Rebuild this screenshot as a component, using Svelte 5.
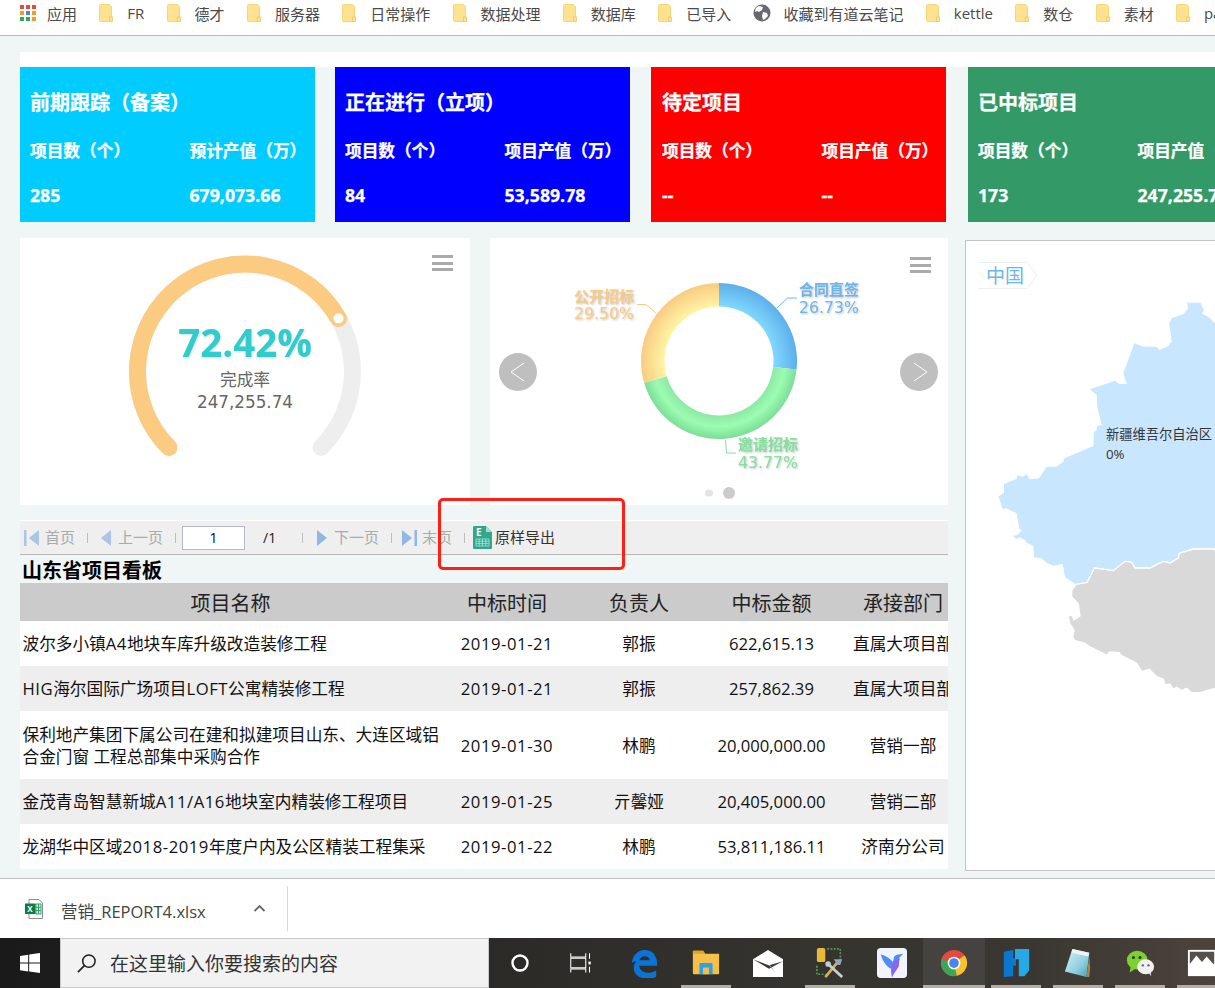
<script>
  const bookmarks = [
    { t: '应用', k: 'apps' }, { t: 'FR', k: 'folder' }, { t: '德才', k: 'folder' }, { t: '服务器', k: 'folder' },
    { t: '日常操作', k: 'folder' }, { t: '数据处理', k: 'folder' }, { t: '数据库', k: 'folder' }, { t: '已导入', k: 'folder' },
    { t: '收藏到有道云笔记', k: 'globe' }, { t: 'kettle', k: 'folder' }, { t: '数仓', k: 'folder' }, { t: '素材', k: 'folder' }, { t: 'pa', k: 'folder' }
  ];
  const appColors = ['#e8483f','#e8483f','#e8483f','#f0a020','#4a86e8','#f0a020','#34a853','#34a853','#f0a020'];
  const cards = [
    { title: '前期跟踪（备案）', a: '项目数（个）', b: '预计产值（万）', x: '285', y: '679,073.66', c: 'cyan' },
    { title: '正在进行（立项）', a: '项目数（个）', b: '项目产值（万）', x: '84', y: '53,589.78', c: 'blue' },
    { title: '待定项目', a: '项目数（个）', b: '项目产值（万）', x: '--', y: '--', c: 'red' },
    { title: '已中标项目', a: '项目数（个）', b: '项目产值（万）', x: '173', y: '247,255.74', c: 'green' }
  ];
  const rows = [
    ['波尔多小镇A4地块车库升级改造装修工程', '2019-01-21', '郭振', '622,615.13', '直属大项目部'],
    ['HIG海尔国际广场项目LOFT公寓精装修工程', '2019-01-21', '郭振', '257,862.39', '直属大项目部'],
    ['保利地产集团下属公司在建和拟建项目山东、大连区域铝合金门窗 工程总部集中采购合作', '2019-01-30', '林鹏', '20,000,000.00', '营销一部'],
    ['金茂青岛智慧新城A11/A16地块室内精装修工程项目', '2019-01-25', '亓馨娅', '20,405,000.00', '营销二部'],
    ['龙湖华中区域2018-2019年度户内及公区精装工程集采', '2019-01-22', '林鹏', '53,811,186.11', '济南分公司']
  ];
  const parts = (s) => s.split(/([A-Za-z0-9\/-]+)/);
  const pt = (cx, cy, r, a) => {
    const t = (a * Math.PI) / 180;
    return [cx + r * Math.sin(t), cy - r * Math.cos(t)];
  };
  const arc = (cx, cy, r, a0, a1) => {
    const [x0, y0] = pt(cx, cy, r, a0);
    const [x1, y1] = pt(cx, cy, r, a1);
    return `M${x0} ${y0}A${r} ${r} 0 ${a1 - a0 > 180 ? 1 : 0} 1 ${x1} ${y1}`;
  };
  const slice = (a0, a1) => {
    const R = 78, r = 54.5, cx = 719, cy = 361;
    const [x0, y0] = pt(cx, cy, R, a0);
    const [x1, y1] = pt(cx, cy, R, a1);
    const [x2, y2] = pt(cx, cy, r, a1);
    const [x3, y3] = pt(cx, cy, r, a0);
    return `M${x0} ${y0}A${R} ${R} 0 0 1 ${x1} ${y1}L${x2} ${y2}A${r} ${r} 0 0 0 ${x3} ${y3}Z`;
  };
  const gaugeEnd = pt(245, 371.5, 107.5, 60.5);
  const taskIcons = ['cortana', 'task', 'edge', 'files', 'mail', 'tools', 'bird', 'chrome', 'fine', 'note', 'wechat', 'photos'];
  const running = ['files', 'tools', 'chrome', 'fine', 'note', 'wechat', 'photos'];
</script>

<div class="screen">
  <nav class="bookmarks">
    {#each bookmarks as b}
      <div class="bm">
        {#if b.k === 'apps'}
          <svg class="bm-apps" viewBox="0 0 16 16">
            {#each appColors as c, i}
              <rect x={(i % 3) * 6} y={Math.floor(i / 3) * 6} width="4" height="4" fill={c} />
            {/each}
          </svg>
        {:else if b.k === 'globe'}
          <svg class="bm-globe" viewBox="0 0 18 18">
            <circle cx="9" cy="9" r="8.5" fill="#666a70" />
            <path d="M6 2l4 1-1 3-3 2-2-1-2 1C2 5 3 3 6 2zM10 8l4 1 1 3-3 3-2 1-1-4z" fill="#fff" />
          </svg>
        {:else}
          <svg class="bm-folder" viewBox="0 0 14 18">
            <path d="M.5 1.5A1 1 0 0 1 1.5.5h9l2 2v14a1 1 0 0 1-1 1h-10a1 1 0 0 1-1-1z" fill="#fee28f" stroke="#f6d67a" />
            <rect x="10.5" y="13" width="3" height="4.5" fill="#fee28f" stroke="#ecc765" stroke-width=".8" />
          </svg>
        {/if}
        <span>{b.t}</span>
      </div>
    {/each}
  </nav>

  <main class="page">
    <div class="strip"></div>
    <section class="cards">
      {#each cards as c}
        <article class="card {c.c}">
          <h2>{c.title}</h2>
          <div class="stat">
            <span>{c.a}</span><span>{c.b}</span>
            <span class="v">{c.x}</span><span class="v">{c.y}</span>
          </div>
        </article>
      {/each}
    </section>

    <div class="columns">
      <div class="left">
        <div class="charts">
          <div class="panel gauge">
            <svg viewBox="20 238 450 267">
              <path d={arc(245, 371.5, 107.5, -135, 135)} fill="none" stroke="#eeeeee" stroke-width="17" stroke-linecap="round" />
              <path d={arc(245, 371.5, 107.5, -135, 60.5)} fill="none" stroke="#facb80" stroke-width="17" stroke-linecap="round" />
              <circle cx={gaugeEnd[0]} cy={gaugeEnd[1]} r="7.5" fill="#facb80" />
              <circle cx={gaugeEnd[0]} cy={gaugeEnd[1]} r="5" fill="#fff" />
              <text class="pct" x="245" y="357">72.42%</text>
              <text class="lab" x="245" y="386">完成率</text>
              <text class="val" x="245" y="408">247,255.74</text>
            </svg>
            <div class="menu"><i></i><i></i><i></i></div>
          </div>
          <div class="panel donut">
            <svg viewBox="490 238 458 267">
              <defs>
                <radialGradient id="gb" gradientUnits="userSpaceOnUse" cx="719" cy="361" r="78">
                  <stop offset=".7" stop-color="#80d8ff" /><stop offset="1" stop-color="#5dafea" />
                </radialGradient>
                <radialGradient id="gg" gradientUnits="userSpaceOnUse" cx="719" cy="361" r="78">
                  <stop offset=".7" stop-color="#8de9a6" /><stop offset=".84" stop-color="#9cfcb1" /><stop offset="1" stop-color="#7cdd97" />
                </radialGradient>
                <radialGradient id="go" gradientUnits="userSpaceOnUse" cx="719" cy="361" r="78">
                  <stop offset=".7" stop-color="#fff4a3" /><stop offset="1" stop-color="#f9cb82" />
                </radialGradient>
              </defs>
              <path d={slice(0, 96.2)} fill="url(#gb)" />
              <path d={slice(96.2, 253.8)} fill="url(#gg)" />
              <path d={slice(253.8, 360)} fill="url(#go)" />
              <polyline class="lead" points="777,308 787.5,298 797,298" stroke="#6cb6ef" />
              <polyline class="lead" points="656,313 646,304.5 637,304.5" stroke="#f9cb82" />
              <polyline class="lead" points="725.5,440 726.5,453 736,453" stroke="#84e09d" />
              <g class="lbl blue-l"><text x="799" y="295">合同直签</text><text class="num" x="799" y="313">26.73%</text></g>
              <g class="lbl orange-l"><text x="574" y="302">公开招标</text><text class="num" x="574" y="319">29.50%</text></g>
              <g class="lbl green-l"><text x="738" y="450">邀请招标</text><text class="num" x="738" y="468">43.77%</text></g>
              <circle cx="518" cy="372" r="19" fill="#bfbfbf" />
              <circle cx="919" cy="372" r="19" fill="#bfbfbf" />
              <polyline class="chev" points="524,363 511,372 524,381" />
              <polyline class="chev" points="914,363 927,372 914,381" />
              <rect x="705" y="489.5" width="8" height="7" rx="3.5" fill="#e4e4e4" />
              <circle cx="729" cy="493" r="6" fill="#cbcbcb" />
            </svg>
            <div class="menu second"><i></i><i></i><i></i></div>
          </div>
        </div>

        <div class="toolbar">
          <svg class="ic first" viewBox="0 0 15 18"><rect x="0" y="1" width="2.5" height="16" fill="#a9c6e6" /><path d="M15 1v16L5 9z" fill="#a9c6e6" /></svg>
          <span class="tx">首页</span>
          <i class="sep"></i>
          <svg class="ic prev" viewBox="0 0 12 18"><path d="M11 1v16L1 9z" fill="#a9c6e6" /></svg>
          <span class="tx">上一页</span>
          <i class="sep tight"></i>
          <input class="pageno" value="1" aria-label="页码" />
          <span class="total">/1</span>
          <i class="sep after-total"></i>
          <svg class="ic next" viewBox="0 0 12 18"><path d="M1 1v16L11 9z" fill="#8fb8e2" /></svg>
          <span class="tx">下一页</span>
          <i class="sep before-last"></i>
          <svg class="ic last" viewBox="0 0 16 18"><path d="M0 1v16L10 9z" fill="#8fb8e2" /><rect x="12.5" y="1" width="2.5" height="16" fill="#8fb8e2" /></svg>
          <span class="tx last-t">末页</span>
          <i class="sep before-xl"></i>
          <svg class="xl" viewBox="0 0 19 23">
            <path d="M0 1a1 1 0 0 1 1-1h12l6 6v16a1 1 0 0 1-1 1H1a1 1 0 0 1-1-1z" fill="#32a78e" />
            <path d="M13 0l6 6h-6z" fill="#a9dccf" />
            <text x="3" y="10" class="xl-e">E</text>
            <path d="M3 13h13v7H3zM3 15.3h13M3 17.6h13M6.2 13v7M9.5 13v7M12.8 13v7" fill="none" stroke="#bfe6dc" stroke-width=".7" />
          </svg>
          <span class="export">原样导出</span>
        </div>

        <h1>山东省项目看板</h1>
        <div class="table-wrap">
          <table>
            <colgroup><col class="c1" /><col class="c2" /><col class="c3" /><col class="c4" /><col class="c5" /></colgroup>
            <thead><tr><th class="th-name">项目名称</th><th>中标时间</th><th>负责人</th><th>中标金额</th><th>承接部门</th></tr></thead>
            <tbody>
              {#each rows as r, i}
                <tr class:alt={i % 2 === 1} class:tall={i === 2}>
                  <td class="name">{#each parts(r[0]) as p, j}{#if j % 2}<span class="lat">{p}</span>{:else}{p}{/if}{/each}</td><td class="lat">{r[1]}</td><td>{r[2]}</td><td>{r[3]}</td><td class="dept">{r[4]}</td>
                </tr>
              {/each}
            </tbody>
          </table>
        </div>
      </div>

      <aside class="map">
        <svg viewBox="966 241 250 629">
          <g transform="translate(1000 480) scale(.33333)">
            <polygon fill="#c8e7ff" points="560,-532 603,-532 605,-522 612,-508 605,-500 625,-490 645,-470 700,-470 700,205 640,205 580,205 538,218 535,232 510,247 490,242 450,262 405,262 395,245 375,242 340,270 285,262 262,305 228,313 195,292 188,252 160,257 140,248 125,235 102,232 100,198 80,188 75,180 58,172 50,178 38,168 52,165 65,152 58,145 50,100 18,85 8,88 3,70 -5,50 12,38 12,12 50,-4 52,-14 70,-10 80,-18 88,-2 117,-5 140,-40 168,-40 190,-55 193,-65 280,-102 282,-145 290,-150 292,-162 305,-165 292,-220 290,-255 270,-272 345,-298 358,-288 380,-288 370,-320 403,-410 430,-400 470,-400 478,-390 505,-402 515,-415 508,-470 515,-485 550,-498 565,-515" />
            <polygon fill="#d9d9d9" stroke="#fff" stroke-width="4" points="228,313 262,307 283,264 340,272 375,244 395,247 405,264 450,264 490,244 510,249 535,234 538,220 580,207 640,207 650,215 700,215 700,600 645,625 600,638 575,638 560,625 545,632 530,622 520,628 510,612 495,615 490,598 470,590 452,572 448,568 425,575 410,550 362,525 358,518 328,516 322,527 305,518 265,498 255,490 225,482 218,472 222,450 210,432 204,408 216,405 222,420 240,408 235,372 215,350 215,332" />
          </g>
          <text class="map-t" x="1106" y="439">新疆维吾尔自治区</text>
          <text class="map-t" x="1106" y="459">0%</text>
          <path d="M978 262.5h49l10 13-10 13h-49" fill="#fff" stroke="#eeeeee" />
          <text class="crumb" x="986" y="282.5">中国</text>
        </svg>
      </aside>
    </div>
  </main>

  <footer class="downloads">
    <svg class="dl-ic" viewBox="0 0 18 20">
      <path d="M4 .5h10l3.5 3.5v15.500H4z" fill="#fff" stroke="#8d8d8d" />
      <path d="M11 5h5v10h-5zM11 8.300h5M11 11.600h5M13.500 5v10" fill="none" stroke="#21a366" />
      <rect x="0" y="4.500" width="10.500" height="10.500" fill="#107c41" />
      <text x="2.300" y="13" class="dl-x">X</text>
    </svg>
    <span class="dl-name">营销_REPORT4.xlsx</span>
    <svg class="dl-up" viewBox="0 0 12 8"><path d="M1 7l5-5 5 5" fill="none" stroke="#666" stroke-width="1.800" /></svg>
    <i class="dl-div"></i>
  </footer>

  <div class="taskbar">
    <div class="start">
      <svg viewBox="0 0 20 20"><path d="M0 2.900l8.200-1.200v7.900H0zM9.200 1.500L20 0v9.600H9.200zM0 10.500h8.200v7.900L0 17.200zM9.200 10.500H20V20L9.200 18.500z" fill="#fff" /></svg>
    </div>
    <div class="search">
      <svg viewBox="0 0 22 22"><circle cx="13.500" cy="8.500" r="6.500" fill="none" stroke="#222" stroke-width="1.600" /><path d="M8.800 13.200L2 20" stroke="#222" stroke-width="1.800" /></svg>
      <span>在这里输入你要搜索的内容</span>
    </div>
    {#each taskIcons as k}
      <div class="cell" class:active={k === 'chrome'} class:run={running.includes(k)}>
        <svg viewBox="0 0 32 32">
          {#if k === 'cortana'}
            <circle cx="16" cy="16" r="8" fill="none" stroke="#fff" stroke-width="2.600" />
          {:else if k === 'task'}
            <path d="M4 5.500v4h16v-4M4 11h16v10H4zM4 26v-3.500h16v3.500M24 5.500v6M24 20v6" fill="none" stroke="#fff" stroke-width="1.100" />
            <rect x="22.800" y="14.500" width="2.600" height="3" fill="#fff" />
          {:else if k === 'edge'}
            <path d="M3 16C4 7 10 2 17 2c8 0 13 6 13 15v2H11c0 7 10 10 18 5v7c-10 4-24 1-24-10 0-3 1-5 3-7-2 0-4 1-5 2zM11 13h11c0-5-9-6-11 0z" fill="#0a74d8" />
          {:else if k === 'files'}
            <path d="M2 4a1 1 0 0 1 1-1h10l2 3h15v21a1 1 0 0 1-1 1H3a1 1 0 0 1-1-1z" fill="#f5c04a" />
            <path d="M2 3h11l2 3H2z" fill="#e6a21e" />
            <path d="M9 28V17a1 1 0 0 1 1-1h12a1 1 0 0 1 1 1v11h-4v-7h-6v7z" fill="#2f9fe6" />
            <rect x="13" y="21" width="6" height="7" fill="#f5c04a" />
          {:else if k === 'mail'}
            <path d="M0 12L16 2l16 10v19H0z" fill="#fff" />
            <path d="M0 12l17 10 15-8-14 4 6 9-6-8z" fill="#3a3a36" />
          {:else if k === 'tools'}
            <rect x="2" y="0" width="9" height="15" rx="2" fill="#e8b93a" />
            <path d="M13 1h14v13M2 19v9h9" fill="none" stroke="#4d9e4d" stroke-width="1.800" stroke-dasharray="2 1.500" />
            <path d="M11 31l14-17" stroke="#d9b35a" stroke-width="2.800" />
            <path d="M14 17l15 14" stroke="#c4cdd6" stroke-width="3" />
            <path d="M20 12h9l-2 6-3 0z" fill="#8ea6bf" />
            <circle cx="14" cy="17" r="3" fill="#c4cdd6" />
          {:else if k === 'bird'}
            <rect x="0" y="0" width="32" height="32" rx="4" fill="#f1f3ff" />
            <path d="M4 7c5 1 10 4 13 8l1-5c1-2 3-3 5-3l5-1-4 4-1 9-6 9-1 3-1-9c-5-2-9-8-11-15z" fill="#4f8df5" />
            <path d="M17 15l7-4-1 9-6 9-1 3-1-9z" fill="#8a63ee" />
          {:else if k === 'chrome'}
            <circle cx="16" cy="16" r="14" fill="#e24b3e" />
            <path d="M16 16L5 24.500A14 14 0 0 0 19 29.700z" fill="#3aa757" />
            <path d="M16 16l3 13.700A14 14 0 0 0 30 16c0-3-1-6-3-8z" fill="#f4c430" />
            <path d="M16 16L2.700 12A14 14 0 0 0 5 24.500z" fill="#3aa757" />
            <circle cx="16" cy="16" r="6.800" fill="#fff" />
            <circle cx="16" cy="16" r="5.200" fill="#4a86e8" />
          {:else if k === 'fine'}
            <path d="M3 4l10-2v9h3v8h-3v11l-10 1z" fill="#0a78cf" />
            <path d="M15 1h15v23l-5 6h-6V12h-4z" fill="#27a9e6" />
          {:else if k === 'note'}
            <defs>
              <linearGradient id="ng" x1="0" y1="0" x2="1" y2="1">
                <stop offset="0" stop-color="#d9f0f4" /><stop offset=".6" stop-color="#8fd0e0" /><stop offset="1" stop-color="#4f9bb0" />
              </linearGradient>
            </defs>
            <path d="M10 1l18 4-3 26L2 25z" fill="url(#ng)" />
            <path d="M10 1l18 4-1 4-18-4z" fill="#eef4f6" />
            <path d="M25 31l3-22 1 12-1 10z" fill="#a5864c" />
          {:else if k === 'wechat'}
            <ellipse cx="13" cy="13" rx="11" ry="10" fill="#7bd130" />
            <path d="M6 20l-1 6 6-4z" fill="#7bd130" />
            <circle cx="9" cy="10" r="1.600" fill="#333" /><circle cx="16" cy="10" r="1.600" fill="#333" />
            <ellipse cx="22" cy="20" rx="9" ry="8" fill="#f2f2f2" />
            <path d="M25 26l3 4-1-6z" fill="#f2f2f2" />
            <circle cx="19" cy="18.500" r="1.300" fill="#666" /><circle cx="25" cy="18.500" r="1.300" fill="#666" />
          {:else}
            <rect x="1" y="2" width="30" height="28" fill="#fff" />
            <rect x="3" y="4" width="26" height="13" fill="#555049" />
            <path d="M3 17l7-9 6 7 5-6 8 9v3H3z" fill="#fff" />
          {/if}
        </svg>
      </div>
    {/each}
  </div>

  <div class="annot" aria-hidden="true"></div>
</div>

<style>
  :global(body) { margin: 0; }
  * { box-sizing: border-box; }
  .screen {
    position: relative;
    width: 1215px;
    height: 988px;
    overflow: hidden;
    display: flex;
    flex-direction: column;
    font-family: "Open Sans", "Noto Sans CJK SC", sans-serif;
    background: #fff;
  }

  .bookmarks {
    flex: none;
    height: 36px;
    padding: 0 0 9px 20px;
    display: flex;
    align-items: center;
    gap: 22.3px;
    background: #fff;
    border-bottom: 1px solid #b9b9b9;
    white-space: nowrap;
    font-size: 15px;
    color: #4a4a4a;
  }
  .bm { flex: none; display: flex; align-items: center; height: 26px; }
  .bm-apps { width: 16px; height: 16px; margin-right: 11px; }
  .bm-folder { width: 14px; height: 18px; margin-right: 14px; }
  .bm-globe { width: 18px; height: 18px; margin-right: 12px; }

  .page {
    flex: none;
    height: 843px;
    padding-top: 16px;
    background: #f0f5f5;
    border-bottom: 1px solid #bdbdbd;
    overflow: hidden;
  }
  .strip { height: 15px; margin-left: 20px; background: #fff; }
  .cards { display: flex; margin-left: 20px; height: 155px; margin-bottom: 16px; }
  .card { flex: none; width: 295px; height: 155px; padding: 21px 0 0 10px; color: #fff; -webkit-text-stroke: .25px #fff; }
  .card + .card { margin-left: 20px; }
  .card:nth-child(3) { margin-left: 21px; padding-left: 11px; }
  .card:nth-child(4) { margin-left: 22px; }
  .cyan { background: #00ccff; }
  .blue { background: #0000ff; }
  .red { background: #ff0000; }
  .green { background: #339966; }
  .card h2 { margin: 0; font-size: 20px; line-height: 30px; font-weight: 700; }
  .stat {
    display: grid;
    grid-template-columns: 159.5px auto;
    justify-content: start;
    row-gap: 20px;
    margin-top: 21px;
    font-size: 16.7px;
    line-height: 24px;
    font-weight: 700;
    white-space: nowrap;
  }
  .stat .v { font-size: 17.7px; }

  .columns { display: flex; margin-left: 20px; align-items: flex-start; }
  .left { flex: none; width: 928px; }
  .charts { display: flex; gap: 20px; height: 267px; margin-bottom: 15px; }
  .panel { position: relative; background: #fff; height: 267px; }
  .panel svg { display: block; width: 100%; height: 100%; }
  .gauge { width: 450px; }
  .donut { width: 458px; }
  .menu { position: absolute; top: 17px; right: 17px; width: 21px; display: flex; flex-direction: column; gap: 3.500px; }
  .menu.second { top: 19px; }
  .menu i { display: block; height: 3px; background: #aaaaaa; }

  .pct { font-size: 38.500px; font-weight: 700; fill: #33cccc; text-anchor: middle; filter: drop-shadow(1px 1px 1px rgba(0,0,0,.15)); }
  .lab { font-size: 16.700px; fill: #666; text-anchor: middle; }
  .val { font-family: "DejaVu Sans", sans-serif; font-size: 16.800px; fill: #666; text-anchor: middle; }
  .lead { fill: none; stroke-width: 1; }
  .lbl text { font-size: 15px; font-weight: 700; filter: drop-shadow(1px 1px 1px rgba(0,0,0,.25)); }
  .lbl .num { font-family: "DejaVu Sans", sans-serif; font-size: 15.700px; font-weight: 400; }
  .blue-l { fill: #6cb6ef; }
  .orange-l { fill: #f9cb82; }
  .green-l { fill: #84e09d; }
  .chev { fill: none; stroke: #fff; stroke-width: 1; }

  .toolbar {
    display: flex;
    align-items: center;
    height: 35px;
    padding-left: 4px;
    background: #efefef;
    border-top: 1px solid #fff;
    border-bottom: 1px solid #b5b5b5;
    font-size: 15px;
    white-space: nowrap;
  }
  .ic { flex: none; height: 18px; margin-right: 6px; }
  .ic.first { width: 15px; }
  .ic.prev, .ic.next { width: 12px; }
  .ic.last { width: 16px; margin-right: 4px; }
  .tx, .export { position: relative; top: -1px; }
  .tx { color: #aaaaaa; }
  .sep { flex: none; width: 1px; height: 10px; margin: 0 12px; background: #bdbdbd; }
  .sep.tight { margin-right: 6px; }
  .sep.after-total { margin: 0 13px 0 25px; }
  .sep.before-last { margin-right: 10px; }
  .sep.before-xl { margin-right: 8px; }
  .pageno {
    flex: none;
    width: 63px;
    height: 24px;
    padding: 0;
    border: 1px solid #b5b8d0;
    background: #fff;
    color: #000066;
    font: 14px "Open Sans", sans-serif;
    text-align: center;
  }
  .total { margin-left: 18px; width: 14px; font-size: 14px; color: #222; }
  .xl { flex: none; width: 19px; height: 23px; margin-right: 3px; }
  .xl-e { font-size: 10px; font-weight: 700; fill: #fff; }
  .export { color: #333; }

  h1 { margin: 0; height: 28px; padding-left: 2px; font-size: 20px; line-height: 31px; font-weight: 700; color: #000; }
  .table-wrap { width: 928px; overflow: hidden; }
  table { width: 950px; table-layout: fixed; border-collapse: collapse; color: #111; font-size: 16.670px; }
  .c1 { width: 423px; } .c2 { width: 128px; } .c3 { width: 136px; } .c4 { width: 129px; } .c5 { width: 134px; }
  th { height: 38px; padding: 0; background: #cbcbcb; font-size: 20px; font-weight: 400; color: #222; }
  .th-name { padding-right: 2px; }
  td { height: 45px; padding: 0; text-align: center; line-height: 22px; background: #fff; overflow: hidden; white-space: nowrap; }
  tr.alt td { background: #eeeeee; }
  tr.tall td { height: 68px; padding-top: 2px; }
  td.name { text-align: left; padding-left: 2.500px; padding-right: 2px; white-space: normal; }
  .lat { letter-spacing: .55px; }

  .map {
    flex: none;
    width: 260px;
    height: 631px;
    margin: 2px 0 0 17px;
    background: #fff;
    border: 1px solid #c4c4c4;
  }
  .map svg { display: block; width: 250px; height: 629px; }
  .map-t { font-size: 13.250px; fill: #333; }
  .crumb { font-size: 19px; fill: #6cb6ef; }

  .downloads {
    flex: none;
    height: 59px;
    padding-left: 25px;
    display: flex;
    align-items: center;
    background: #fff;
    color: #444;
  }
  .dl-ic { width: 18px; height: 20px; margin: 0 18px 0 0; }
  .dl-name { width: 145px; font-size: 16.500px; white-space: nowrap; margin-top: 5px; }
  .dl-x { font-size: 8px; font-weight: 700; fill: #fff; }
  .dl-up { width: 13px; height: 8px; margin: -2px 0 0 47px; }
  .dl-div { width: 1px; height: 45px; margin-left: 21px; background: #d6d6d6; }

  .taskbar {
    flex: none;
    height: 50px;
    display: flex;
    background: linear-gradient(90deg, #1a1a1a 0%, #2b2a27 40%, #34332e 65%, #3a3732 85%, #4c433c 100%);
  }
  .start { flex: none; width: 60px; display: flex; align-items: center; justify-content: center; }
  .start svg { width: 20px; height: 20px; }
  .search {
    flex: none;
    width: 429px;
    display: flex;
    align-items: center;
    padding-left: 15px;
    gap: 13px;
    background: #f2f2f2;
    border: 1px solid #c9c9c9;
    color: #333;
    font-size: 19px;
    white-space: nowrap;
  }
  .search svg { width: 21px; height: 21px; }
  .cell { position: relative; flex: none; width: 62px; display: flex; align-items: center; justify-content: center; }
  .cell svg { width: 30px; height: 30px; }
  .cell.active { background: #44433f; }
  .cell.run::after {
    content: "";
    position: absolute;
    left: 6px;
    right: 6px;
    bottom: 0;
    height: 3px;
    background: #b2aea6;
  }
  .cell.active::after { left: 0; right: 0; }

  .annot {
    position: absolute;
    left: 438px;
    top: 498px;
    width: 187px;
    height: 72px;
    border: 3px solid #ff2015;
    border-radius: 5px;
  }
</style>
